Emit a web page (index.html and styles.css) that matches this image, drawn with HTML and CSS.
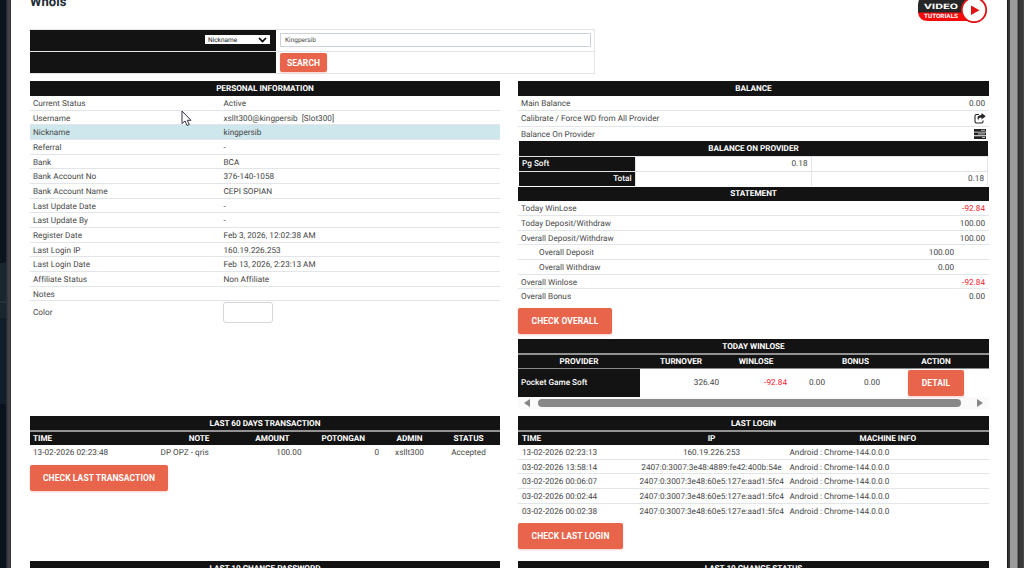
FILE: index.html
```html
<!DOCTYPE html>
<html lang="en">
<head>
  <meta charset="UTF-8">
  <meta name="viewport" content="width=device-width, initial-scale=1.0">
  <title>Whois</title>
  <link rel="stylesheet" href="styles.css">
</head>
<body>
  <div class="edge-left"></div>
  <div class="page">
    <div class="topbar">
      <h2>Whois</h2>
      <svg class="video" width="72" height="30" viewBox="0 0 72 30">
        <path d="M10 3H58V20H1V12Q1 3 10 3Z" fill="#262626"/>
        <path d="M1 19.500H58V28H11Q2 28 1 19.500Z" fill="#f90a0a"/>
        <path d="M46 20Q43 12 49 5L60 5V28H50Q46 25 46 20Z" fill="#262626" opacity=".55"/>
        <circle cx="57" cy="17" r="12.200" fill="#fff" stroke="#e01212" stroke-width="1.800"/>
        <path d="M54 12.500L62.500 17.300L54 22Z" fill="#e01212"/>
        <text x="7" y="15.500" class="video-top" textLength="34" lengthAdjust="spacingAndGlyphs">VIDEO</text>
        <text x="7" y="25.300" class="video-bottom" textLength="34" lengthAdjust="spacingAndGlyphs">TUTORIALS</text>
      </svg>
    </div>

    <div class="search">
      <div class="search-dark">
        <span class="select">Nickname
          <svg width="9" height="6" viewBox="0 0 9 6"><path d="M1 1L4.500 4.500L8 1" fill="none" stroke="#000" stroke-width="1.700"/></svg>
        </span>
      </div>
      <div class="search-cell"><span class="field">Kingpersib</span></div>
      <div class="search-dark"></div>
      <div class="search-cell"><button class="btn btn-search">SEARCH</button></div>
    </div>

    <div class="columns top">
      <div class="col">
        <div class="bar">PERSONAL INFORMATION</div>
        <div class="row info"><span>Current Status</span><span>Active</span></div>
        <div class="row info"><span>Username</span><span>xsllt300@kingpersib &nbsp;[Slot300]</span></div>
        <div class="row info active"><span>Nickname</span><span>kingpersib</span></div>
        <div class="row info"><span>Referral</span><span>-</span></div>
        <div class="row info"><span>Bank</span><span>BCA</span></div>
        <div class="row info"><span>Bank Account No</span><span>376-140-1058</span></div>
        <div class="row info"><span>Bank Account Name</span><span>CEPI SOPIAN</span></div>
        <div class="row info"><span>Last Update Date</span><span>-</span></div>
        <div class="row info"><span>Last Update By</span><span>-</span></div>
        <div class="row info"><span>Register Date</span><span>Feb 3, 2026, 12:02:38 AM</span></div>
        <div class="row info"><span>Last Login IP</span><span>160.19.226.253</span></div>
        <div class="row info"><span>Last Login Date</span><span>Feb 13, 2026, 2:23:13 AM</span></div>
        <div class="row info"><span>Affiliate Status</span><span>Non Affiliate</span></div>
        <div class="row info"><span>Notes</span><span></span></div>
        <div class="row info color"><span>Color</span><span class="swatch"></span></div>
      </div>

      <div class="col">
        <div class="bar">BALANCE</div>
        <div class="row pair"><span>Main Balance</span><span>0.00</span></div>
        <div class="row pair tall"><span>Calibrate / Force WD from All Provider</span>
          <svg width="12" height="11" viewBox="0 0 12 11"><path d="M5 1.500H2.500Q1 1.500 1 3V8.500Q1 10 2.500 10H7.500Q9 10 9 8.500V7.500" fill="none" stroke="#222" stroke-width="1.100"/><path d="M7.500 0L11.700 3.200L7.500 6.400V4.500Q4.500 4.300 4.200 7.500Q1.800 2 7.500 1.900Z" fill="#222"/></svg>
        </div>
        <div class="row pair last"><span>Balance On Provider</span>
          <svg width="12" height="10" viewBox="0 0 12 10"><path d="M0 0H12V2.700H0ZM0 3.600H12V6.300H0ZM0 7.200H12V9.900H0Z" fill="#222"/><path d="M7 1.300H11M4 4.900H11M8 8.500H11" stroke="#ccc" stroke-width=".9"/></svg>
        </div>
        <div class="provider">
          <div class="bar">BALANCE ON PROVIDER</div>
          <div class="provider-row"><span class="dark">Pg Soft</span><span>0.18</span><span></span></div>
          <div class="provider-row"><span class="dark right">Total</span><span></span><span>0.18</span></div>
        </div>
        <div class="bar statement">STATEMENT</div>
        <div class="row pair"><span>Today WinLose</span><span class="red">-92.84</span></div>
        <div class="row pair"><span>Today Deposit/Withdraw</span><span>100.00</span></div>
        <div class="row pair"><span>Overall Deposit/Withdraw</span><span>100.00</span></div>
        <div class="row pair indent"><span>Overall Deposit</span><span>100.00</span></div>
        <div class="row pair indent"><span>Overall Withdraw</span><span>0.00</span></div>
        <div class="row pair"><span>Overall Winlose</span><span class="red">-92.84</span></div>
        <div class="row pair last"><span>Overall Bonus</span><span>0.00</span></div>
        <button class="btn btn-overall">CHECK OVERALL</button>

        <div class="bar stacked">TODAY WINLOSE</div>
        <div class="head winlose"><span>PROVIDER</span><span>TURNOVER</span><span>WINLOSE</span><span></span><span>BONUS</span><span>ACTION</span></div>
        <div class="winlose winlose-row">
          <span class="dark">Pocket Game Soft</span><span>326.40</span><span class="red">-92.84</span><span>0.00</span><span>0.00</span>
          <button class="btn btn-detail">DETAIL</button>
        </div>
        <div class="scroll"><i class="arrow-left"></i><i class="thumb"></i><i class="arrow-right"></i></div>
      </div>
    </div>

    <div class="columns middle">
      <div class="col">
        <div class="bar stacked">LAST 60 DAYS TRANSACTION</div>
        <div class="head trans"><span>TIME</span><span>NOTE</span><span>AMOUNT</span><span>POTONGAN</span><span>ADMIN</span><span>STATUS</span></div>
        <div class="row trans last"><span>13-02-2026 02:23:48</span><span>DP OPZ - qris</span><span>100.00</span><span>0</span><span>xsllt300</span><span>Accepted</span></div>
        <button class="btn btn-trans">CHECK LAST TRANSACTION</button>
      </div>
      <div class="col">
        <div class="bar stacked">LAST LOGIN</div>
        <div class="head login"><span>TIME</span><span>IP</span><span>MACHINE INFO</span></div>
        <div class="row login"><span>13-02-2026 02:23:13</span><span>160.19.226.253</span><span>Android : Chrome-144.0.0.0</span></div>
        <div class="row login"><span>03-02-2026 13:58:14</span><span>2407:0:3007:3e48:4889:fe42:400b:54e</span><span>Android : Chrome-144.0.0.0</span></div>
        <div class="row login"><span>03-02-2026 00:06:07</span><span>2407:0:3007:3e48:60e5:127e:aad1:5fc4</span><span>Android : Chrome-144.0.0.0</span></div>
        <div class="row login"><span>03-02-2026 00:02:44</span><span>2407:0:3007:3e48:60e5:127e:aad1:5fc4</span><span>Android : Chrome-144.0.0.0</span></div>
        <div class="row login last"><span>03-02-2026 00:02:38</span><span>2407:0:3007:3e48:60e5:127e:aad1:5fc4</span><span>Android : Chrome-144.0.0.0</span></div>
        <button class="btn btn-login">CHECK LAST LOGIN</button>
      </div>
    </div>

    <div class="columns">
      <div class="col"><div class="bar">LAST 10 CHANGE PASSWORD</div></div>
      <div class="col"><div class="bar">LAST 10 CHANGE STATUS</div></div>
    </div>
  </div>
  <div class="edge-right"></div>
  <svg class="cursor" width="12" height="18" viewBox="0 0 12 18"><path d="M1 1V13.500L4 11L6 15.500L8.300 14.500L6.300 10.300H10Z" fill="#fff" stroke="#334" stroke-width="1"/></svg>
</body>
</html>
```
FILE: styles.css
```css
* {
  box-sizing: border-box;
}

body {
  margin: 0;
  width: 1024px;
  height: 568px;
  overflow: hidden;
  display: flex;
  background: #fff;
  color: #464646;
  font-family: Roboto, sans-serif;
  font-size: 8.2px;
  letter-spacing: 0.01px;
  text-rendering: geometricPrecision;
}

.edge-left {
  flex: 0 0 11px;
  background: linear-gradient(90deg, transparent 6px, #25282c 6px, #47484a 9px, #303134 11px),
    linear-gradient(#0b131e 0 263px, #1a2530 263px 301px, #25323d 301px 303px, #1a2530 303px 318px, #111d29 318px 404px, #09121d 404px);
}

.edge-right {
  flex: 0 0 17px;
  background: linear-gradient(90deg, #1b1b1b 0 1px, #343434 1px 3px, #9b9b9b 3px 10px, #6d6d6d 10px 11px, #292b2d 11px 12px, #38393b 12px 16px, #4b4744 16px);
}

.page {
  flex: 1;
  padding: 0 18px 0 19px;
  height: 568px;
  overflow: hidden;
}

.topbar {
  display: flex;
  justify-content: space-between;
  height: 29px;
}

h2 {
  margin: -5px 0 0;
  font-size: 13px;
  line-height: 16px;
  color: #222b35;
  letter-spacing: 0.1px;
}

.video {
  margin: -7px 0 0 0;
}

.video-top,
.video-bottom {
  fill: #fff;
  font-weight: 700;
  letter-spacing: 0;
}

.video-top {
  font-size: 7.5px;
}

.video-bottom {
  font-size: 6px;
}

.search {
  display: grid;
  grid-template-columns: 246px 318px;
  grid-template-rows: 21px 21px;
  width: 565px;
  height: 45px;
  border: 1px solid #e2e5e9;
  border-left: 0;
  background: #e2e5e9;
  gap: 1px 0;
  font-size: 6.5px;
  letter-spacing: 0;
}

.search-dark {
  background: #131313;
  display: flex;
  justify-content: flex-end;
  padding: 5px 6px 0 0;
}

.search-cell {
  background: #fff;
  padding: 3px 3px 0 4px;
}

.search-cell + .search-dark + .search-cell {
  padding-top: 1px;
}

.select {
  display: flex;
  justify-content: space-between;
  align-items: center;
  width: 65px;
  height: 9px;
  padding: 0 3px;
  background: #fff;
  color: #111;
}

.field {
  display: block;
  height: 14px;
  padding: 0 4px;
  border: 1px solid #ccd2d9;
  line-height: 13px;
}

.btn {
  display: block;
  height: 26px;
  padding: 0;
  border: 0;
  border-radius: 2px;
  background: #e8654b;
  box-shadow: 0 1px 2px rgba(232, 101, 75, 0.3);
  color: #fff;
  font-family: inherit;
  font-size: 8.5px;
  font-weight: 700;
  letter-spacing: 0.08px;
}

.btn-search {
  width: 47px;
  height: 19px;
}

.columns {
  display: grid;
  grid-template-columns: 470px 471px;
  column-gap: 18px;
}

.top {
  height: 335px;
  margin-top: 7px;
}

.middle {
  height: 145px;
}

.bar,
.head {
  background: #131313;
  color: #fff;
  font-weight: 700;
  letter-spacing: -0.03px;
  text-align: center;
}

.bar {
  height: 15px;
  line-height: 16px;
}

.bar.stacked {
  height: 16px;
  border-bottom: 2px solid #929292;
}

.head {
  height: 13px;
  line-height: 14px;
}

.row {
  height: 14.67px;
  line-height: 16px;
  padding: 0 4px 0 3px;
  border-bottom: 1px solid #e2e5e9;
  white-space: nowrap;
}

.row.last {
  border-bottom-color: transparent;
}

.info {
  display: grid;
  grid-template-columns: 190.5px 1fr;
}

.info.active {
  background: #cee7ec;
}

.info.color {
  height: 22px;
  line-height: 22px;
  padding-top: 1px;
  border: 0;
}

.swatch {
  width: 50px;
  height: 21px;
  margin-left: -1px;
  border: 1px solid #d4d6d9;
  border-radius: 3px;
}

.pair {
  display: flex;
  justify-content: space-between;
}

.pair svg {
  margin: 2px -1px 0 0;
}

.pair.tall {
  height: 16px;
}

.pair.indent {
  padding: 0 35px 0 21px;
}

.provider {
  margin: 0 1px;
}

.provider-row {
  display: grid;
  grid-template-columns: 116.5px 176px 1fr;
  height: 15px;
  line-height: 15px;
  border-top: 1px solid #dfe2e6;
  text-align: right;
}

.provider-row span {
  height: 14px;
  padding: 0 3px;
  border-right: 1px solid #e2e5e9;
}

.dark {
  background: #131313;
  color: #fff;
  font-weight: 500;
  text-align: left;
}

.provider-row .right {
  text-align: right;
}

.bar.statement {
  height: 14px;
  margin-top: 1px;
  line-height: 14px;
}

.btn-overall {
  width: 94px;
  margin: 4.5px 0 5px;
}

.winlose {
  display: grid;
  grid-template-columns: 122px 82px 68px 38px 55px 1fr;
}

.winlose-row {
  height: 29px;
  line-height: 29px;
  border-top: 1px solid #8a8a8a;
  text-align: right;
}

.winlose-row span {
  height: 28px;
  padding: 0 3px;
}

.winlose-row .dark {
  text-align: left;
}

.btn-detail {
  width: 56px;
  margin: 1px 0 0 25px;
}

.red {
  color: #f5222d;
}

.scroll {
  display: flex;
  justify-content: space-between;
  align-items: center;
  height: 12px;
  padding: 0 6px;
  background: #fafafa;
}

.arrow-left,
.arrow-right {
  border: 4px solid transparent;
}

.arrow-left {
  border-left: 0;
  border-right: 6px solid #858585;
}

.arrow-right {
  border-right: 0;
  border-left: 6px solid #858585;
}

.thumb {
  width: 423px;
  height: 8px;
  margin-right: 9px;
  border-radius: 4px;
  background: #888;
}

.trans {
  display: grid;
  grid-template-columns: 127.5px 83px 64px 77.5px 55px 1fr;
}

.login {
  display: grid;
  grid-template-columns: 118.5px 150px 1fr;
}

.trans.row,
.login.row {
  padding: 0;
}

.trans span,
.login span {
  padding: 0 3px;
}

.login span:first-child {
  padding-left: 4px;
}

.head.trans span:first-child,
.head.login span:first-child {
  text-align: left;
}

.row.trans span:nth-child(3),
.row.trans span:nth-child(4) {
  text-align: right;
}

.row.trans span:nth-child(5),
.row.trans span:nth-child(6),
.row.login span:nth-child(2) {
  text-align: center;
}

.btn-trans {
  width: 138px;
  margin-top: 5px;
}

.btn-login {
  width: 105px;
  margin-top: 5px;
}

.cursor {
  position: absolute;
  left: 181px;
  top: 110px;
}
```
